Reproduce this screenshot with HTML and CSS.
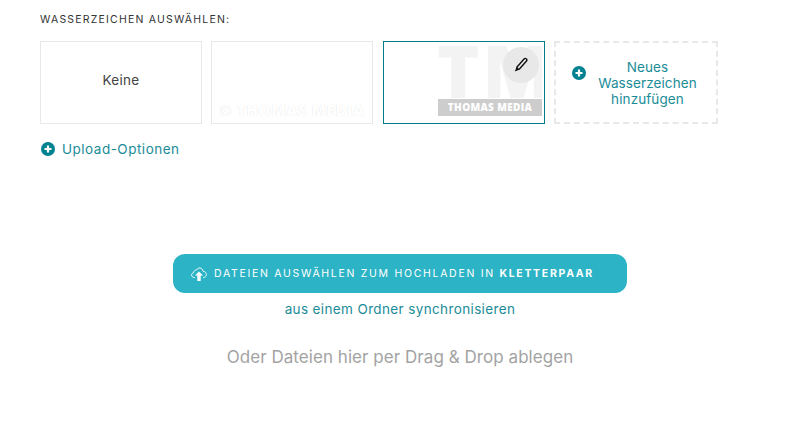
FILE: index.html
```html
<!doctype html>
<html lang="de">
  <head>
    <meta charset="UTF-8" />
    <title>Wasserzeichen</title>
    <link rel="stylesheet" href="styles.css">
  </head>
  <body>
    <section class="watermarks">
      <h2 class="section-title">Wasserzeichen auswählen:</h2>
      <div class="tiles">
        <div class="tile tile-none">Keine</div>
        <div class="tile tile-text"><span class="mark-text">© THOMAS MEDIA</span></div>
        <div class="tile tile-selected">
          <div class="mark-logo">
            <div class="mark-letters">TM</div>
            <div class="mark-banner">THOMAS MEDIA</div>
          </div>
          <button class="edit-btn" type="button" aria-label="Bearbeiten">
            <svg width="16" height="16" viewBox="0 0 16 16">
              <path d="M11.300 1.800c.7-.6 1.500-.5 2.100.1s.7 1.400.1 2.100L6.200 12.200l-2.900 1L4 10z" fill="#e8e8e8" stroke="#111" stroke-width="1.400" stroke-linejoin="round"/>
              <path d="M4 10l2.200 2.200-2.900 1-.9 1.300-.7-.7 1.200-1z" fill="#111"/>
            </svg>
          </button>
        </div>
        <div class="tile tile-add">
          <svg class="plus-icon" width="14" height="14" viewBox="0 0 14 14">
            <circle cx="7" cy="7" r="7" fill="#008290"/>
            <path d="M7 3.500v7M3.500 7h7" stroke="#fff" stroke-width="2.200"/>
          </svg>
          <span class="add-label">Neues Wasserzeichen hinzufügen</span>
        </div>
      </div>
      <a class="upload-options" href="#">
        <svg class="plus-icon" width="14" height="14" viewBox="0 0 14 14">
          <circle cx="7" cy="7" r="7" fill="#008290"/>
          <path d="M7 3.500v7M3.500 7h7" stroke="#fff" stroke-width="2.200"/>
        </svg>
        Upload-Optionen
      </a>
    </section>

    <section class="upload">
      <button class="upload-btn" type="button">
        <svg width="16" height="14" viewBox="0 0 16 14">
          <path d="M4 10.500H3.200C1.700 10.500.600 9.400.600 8c0-1.200.9-2.200 2-2.400C2.800 3.800 4.200 2.700 5.600 3 6.300 1.600 7.600.8 9 1c1.700.2 3 1.600 3 3.300 1.900 0 3.400 1.500 3.400 3.300 0 1.600-1.300 2.900-3 2.900H12" fill="none" stroke="#fff" stroke-width=".9"/>
          <path d="M8 4.500l4 4H9.700V14H6.300V8.500H4z" fill="#fff"/>
        </svg>
        <span>Dateien auswählen zum Hochladen in <b>Kletterpaar</b></span>
      </button>
      <a class="sync-link" href="#">aus einem Ordner synchronisieren</a>
      <p class="drop-hint">Oder Dateien hier per Drag &amp; Drop ablegen</p>
    </section>
  </body>
</html>
```

FILE: styles.css
```css
/* Page */
body {
  margin: 0;
  background: #fff;
  font-family: Inter, "Open Sans", sans-serif;
  color: #333;
  overflow: hidden;
}

a {
  color: #008290;
  text-decoration: none;
}

/* Watermark picker */
.watermarks {
  padding: 13px 40px 0;
}

.section-title {
  margin: 0 0 15px;
  font-size: 10.5px;
  line-height: 13px;
  font-weight: 400;
  letter-spacing: 1.2px;
  text-transform: uppercase;
  color: #333;
}

.tiles {
  display: flex;
  gap: 9px;
}

.tile {
  position: relative;
  box-sizing: border-box;
  width: 162px;
  height: 83px;
  border: 1px solid #e8e8e8;
  display: flex;
  overflow: hidden;
}

.tile-none {
  align-items: center;
  justify-content: center;
  padding-bottom: 5px;
  font-size: 13.5px;
  letter-spacing: 0.3px;
  color: #444;
}

.tile-text {
  align-items: flex-end;
  justify-content: center;
  padding-bottom: 5px;
}

.mark-text {
  font-family: "Open Sans", sans-serif;
  font-size: 15px;
  line-height: 16px;
  font-weight: 800;
  letter-spacing: 0.6px;
  white-space: nowrap;
  color: #fff;
  text-shadow: 0 0 1px #dcdcdc;
}

.tile-selected {
  margin-left: 1px;
  border-color: #007d88;
  justify-content: flex-end;
  padding: 1px 2px 7px 0;
}

.mark-logo {
  width: 104px;
  display: flex;
  flex-direction: column;
  justify-content: space-between;
  overflow: hidden;
}

.mark-letters {
  margin-left: -1px;
  font-family: "Open Sans", sans-serif;
  font-size: 72px;
  line-height: 54px;
  font-weight: 800;
  letter-spacing: 3px;
  color: #f3f3f3;
  white-space: nowrap;
}

.mark-banner {
  height: 17px;
  background: #cdcdcd;
  color: #fff;
  font-family: "Open Sans", sans-serif;
  font-size: 10px;
  line-height: 17px;
  font-weight: 800;
  letter-spacing: 0.35px;
  text-align: center;
}

.edit-btn {
  position: absolute;
  top: 5px;
  right: 5px;
  width: 36px;
  height: 36px;
  padding: 0;
  border: 0;
  border-radius: 50%;
  background: #e8e8e8;
  display: flex;
  align-items: center;
  justify-content: center;
}

.tile-add {
  width: 164px;
  border: 2px dashed #e8e8e8;
  padding: 0 15px 0 16px;
  align-items: center;
  gap: 8px;
}

.plus-icon {
  flex: none;
}

.tile-add .plus-icon {
  margin-bottom: 19px;
}

.add-label {
  flex: 1;
  font-size: 13.5px;
  line-height: 16px;
  letter-spacing: 0.1px;
  text-align: center;
  color: #1b8c98;
}

.upload-options {
  display: inline-flex;
  align-items: center;
  gap: 7px;
  margin: 16px 0 0 1px;
  font-size: 13.5px;
  line-height: 18px;
  letter-spacing: 0.5px;
  color: #1b8c98;
}

/* Upload area */
.upload {
  margin-top: 94px;
  display: flex;
  flex-direction: column;
  align-items: center;
}

.upload-btn {
  box-sizing: border-box;
  width: 454px;
  height: 39px;
  border: 0;
  border-radius: 12px;
  background: #2cb3c5;
  color: #fff;
  font-family: inherit;
  font-size: 10.5px;
  letter-spacing: 1.7px;
  text-transform: uppercase;
  display: flex;
  align-items: center;
  gap: 7px;
  padding: 0 0 0 18px;
}

.upload-btn b {
  font-weight: 700;
}

.sync-link {
  margin-top: 8px;
  font-size: 13.5px;
  line-height: 16px;
  letter-spacing: 0.37px;
  color: #1b8c98;
}

.drop-hint {
  margin: 30px 0 0;
  font-size: 17px;
  line-height: 20px;
  letter-spacing: 0.05px;
  color: #a3a3a3;
}
```
